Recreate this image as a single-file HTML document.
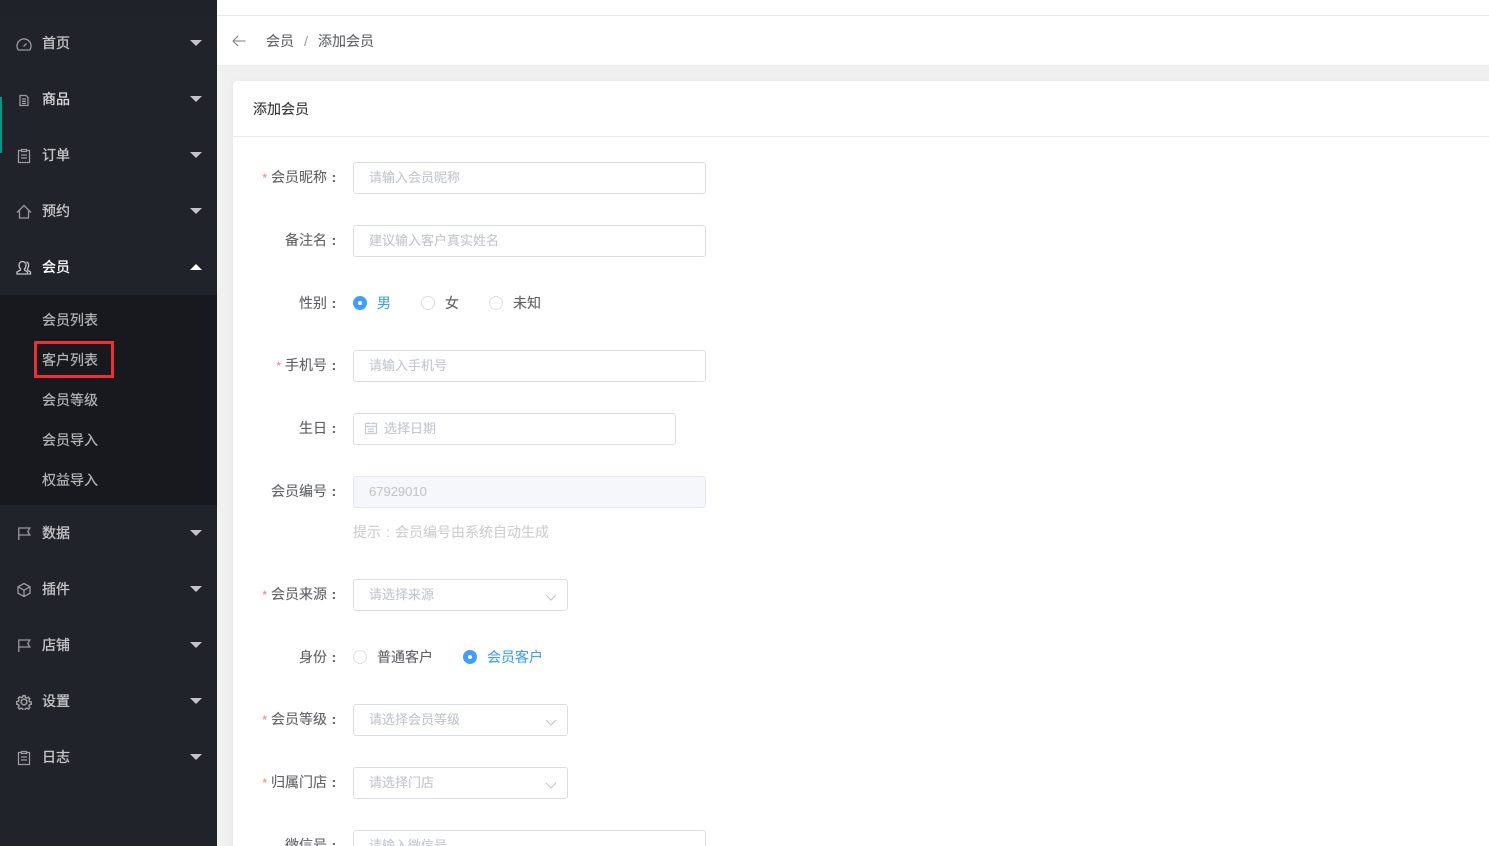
<!DOCTYPE html>
<html lang="zh-CN">
<head>
<meta charset="utf-8">
<title>添加会员</title>
<style>
*{box-sizing:border-box;margin:0;padding:0}
html,body{width:1489px;height:846px;overflow:hidden;background:#f0f0f0}
body{position:relative;font-family:"Liberation Sans","WenQuanYi Zen Hei","Noto Sans CJK SC",sans-serif;font-size:14px;color:#606266}
.abs{position:absolute;white-space:nowrap}
#side{position:absolute;left:0;top:0;width:217px;height:846px;background:#20232a;overflow:hidden}
#sub{position:absolute;left:0;top:295px;width:217px;height:210px;background:#18191e}
.mi{position:absolute;left:42px;width:60px;height:20px;line-height:20px;color:#c6c6c8;font-size:14px;white-space:nowrap;-webkit-text-stroke:.3px currentColor}
.si{position:absolute;left:42px;height:20px;line-height:20px;color:#b4b5b8;font-size:14px;white-space:nowrap;-webkit-text-stroke:.2px currentColor}
.tri{position:absolute;left:190px;width:0;height:0;border-left:6px solid transparent;border-right:6px solid transparent;border-top:6px solid #c4c5c8}
.tri.up{border-top:0;border-bottom:6px solid #fff}
.ic{position:absolute;left:16px;width:16px;height:16px;fill:none;stroke:#9a9b9f;stroke-width:1.3}
#top{position:absolute;left:217px;top:0;width:1272px;height:16px;background:#fff;border-bottom:1px solid #e8e8ea}
#crumb{position:absolute;left:217px;top:16px;width:1272px;height:50px;background:#fff;border-bottom:1px solid #ececee}
#card{position:absolute;left:233px;top:81px;width:1256px;height:780px;background:#fff;border-radius:4px 0 0 0;box-shadow:0 0 5px rgba(0,0,0,.05)}
#hd{position:absolute;left:233px;top:136px;width:1256px;height:1px;background:#e8eaf2}
.lb{position:absolute;right:1148px;height:20px;line-height:20px;color:#606266;white-space:nowrap;text-align:right;-webkit-text-stroke:.12px currentColor}
.c{display:inline-block;width:14px;text-align:center;font-family:"Liberation Sans",sans-serif;font-weight:bold}
.req{color:#f78989;font-size:12px;margin-right:4px;font-family:"Liberation Sans",sans-serif}
.inp{position:absolute;left:353px;height:32px;width:353px;border:1px solid #dcdee6;border-radius:3px;background:#fff;line-height:30px;padding-left:15px;color:#c3c6ce;white-space:nowrap;font-size:13px;-webkit-text-stroke:.12px currentColor}
.sel{width:215px}
.sel svg{position:absolute;left:190px;top:13px;width:14px;height:10px;fill:none;stroke:#c0c4cc;stroke-width:1}
.r{position:absolute;width:14px;height:14px;border-radius:50%;border:1px solid #dcdfe6;background:#fff}
.r.on{background:#409eff;border-color:#409eff}
.r.on::after{content:"";position:absolute;left:4px;top:4px;width:4px;height:4px;border-radius:50%;background:#fff}
.t{position:absolute;height:20px;line-height:20px;white-space:nowrap;color:#606266;-webkit-text-stroke:.12px currentColor}
.blue{color:#409eff}
</style>
</head>
<body>
<div id="side">
  <div class="abs" style="left:0;top:0;width:217px;height:15px;background:#1f2229"></div>
  <div class="abs" style="left:0;top:97px;width:2px;height:56px;background:#009688"></div>
  <div id="sub"></div>

  <svg class="ic" style="top:36px" viewBox="0 0 16 16"><path d="M2.300 14h11.400a7 7 0 1 0-11.400 0zM7.500 10.500l3-3"/></svg>
  <div class="mi" style="top:33px">首页</div><div class="tri" style="top:40px"></div>

  <svg class="ic" style="top:92px" viewBox="0 0 16 16"><path d="M4 3.500h6l2 2v8H4zM6 7h4M6 9.300h4M6 11.500h4"/></svg>
  <div class="mi" style="top:89px;color:#dcdcde">商品</div><div class="tri" style="top:96px"></div>

  <svg class="ic" style="top:148px" viewBox="0 0 16 16"><path d="M5.500 2.500h-3v12h11v-12h-3M5.500 1.500h5v2h-5zM5 7h6M5 10h6"/></svg>
  <div class="mi" style="top:145px">订单</div><div class="tri" style="top:152px"></div>

  <svg class="ic" style="top:204px" viewBox="0 0 16 16"><path d="M1 8.500L8 1.500l7 7M3.500 7v7h9V7"/></svg>
  <div class="mi" style="top:201px">预约</div><div class="tri" style="top:208px"></div>

  <svg class="ic" style="top:260px;stroke:#c4c5c8" viewBox="0 0 16 16"><path d="M6.500 1.500a3.500 3.500 0 0 1 3.500 3.500c0 2-1 3.500-1.500 4v1l3 2v2H1v-2l3.500-2V9C4 8.500 3 7 3 5a3.500 3.500 0 0 1 3.500-3.500zM10.500 2c2 .5 2.500 3 2 4.500-.3 1-.8 2-1 2.500v1l3 2v2h-2"/></svg>
  <div class="mi" style="top:257px;color:#fff">会员</div><div class="tri up" style="top:264px"></div>

  <div class="si" style="top:310px">会员列表</div>
  <div class="si" style="top:350px">客户列表</div>
  <div class="abs" style="left:34px;top:341px;width:80px;height:37px;border:3px solid #ee2f33"></div>
  <div class="si" style="top:390px">会员等级</div>
  <div class="si" style="top:430px">会员导入</div>
  <div class="si" style="top:470px">权益导入</div>

  <svg class="ic" style="top:525px" viewBox="0 0 16 16"><path d="M2.800 15V3h11l-2 3.500 2 3.500h-11"/></svg>
  <div class="mi" style="top:523px">数据</div><div class="tri" style="top:530px"></div>

  <svg class="ic" style="top:582px" viewBox="0 0 16 16"><path d="M8 1.500l6 3.300v6.400l-6 3.300-6-3.300V4.800zM2.500 5L8 8.200 13.500 5M8 8.200v6"/></svg>
  <div class="mi" style="top:579px">插件</div><div class="tri" style="top:586px"></div>

  <svg class="ic" style="top:637px" viewBox="0 0 16 16"><path d="M2.800 15V3h11l-2 3.500 2 3.500h-11"/></svg>
  <div class="mi" style="top:635px">店铺</div><div class="tri" style="top:642px"></div>

  <svg class="ic" style="top:694px;stroke-width:1.700" viewBox="0 0 16 16"><circle cx="8" cy="8" r="2.800"/><path d="M6.800 1h2.400l.4 2 1.500.7 1.800-1 1.600 1.700-1 1.700.6 1.500 2 .5v2.400l-2 .4-.6 1.500 1 1.700-1.700 1.700-1.700-1-1.500.6-.4 2H6.800l-.4-2-1.500-.6-1.700 1-1.700-1.700 1-1.700-.6-1.500-2-.4V7.600l2-.5.6-1.500-1-1.700L3.200 2.200l1.700 1 1.500-.6z" transform="translate(.8 .8) scale(.9)"/></svg>
  <div class="mi" style="top:691px">设置</div><div class="tri" style="top:698px"></div>

  <svg class="ic" style="top:750px" viewBox="0 0 16 16"><path d="M5.500 2.500h-3v12h11v-12h-3M5.500 1.500h5v2h-5zM5 7h6M5 10h6"/></svg>
  <div class="mi" style="top:747px">日志</div><div class="tri" style="top:754px"></div>
</div>

<div id="top"></div>
<div id="crumb"></div>
<svg class="abs" style="left:232px;top:35px" width="14" height="12" viewBox="0 0 14 12" fill="none" stroke="#7b7d82" stroke-width="1"><path d="M13.500 6H1M6 1L1 6l5 5"/></svg>
<div class="t" style="left:266px;top:31px">会员</div>
<div class="t" style="left:304px;top:31px;color:#a0a2a6">/</div>
<div class="t" style="left:318px;top:31px">添加会员</div>

<div id="card"></div>
<div id="hd"></div>
<div class="t" style="left:253px;top:99px;color:#303133">添加会员</div>

<div class="lb" style="top:167px"><span class="req">*</span>会员昵称<span class="c">:</span></div>
<div class="inp" style="top:162px">请输入会员昵称</div>

<div class="lb" style="top:230px">备注名<span class="c">:</span></div>
<div class="inp" style="top:225px">建议输入客户真实姓名</div>

<div class="lb" style="top:293px">性别<span class="c">:</span></div>
<div class="r on" style="left:353px;top:296px"></div><div class="t blue" style="left:377px;top:293px">男</div>
<div class="r" style="left:421px;top:296px"></div><div class="t" style="left:445px;top:293px">女</div>
<div class="r" style="left:489px;top:296px"></div><div class="t" style="left:513px;top:293px">未知</div>

<div class="lb" style="top:355px"><span class="req">*</span>手机号<span class="c">:</span></div>
<div class="inp" style="top:350px">请输入手机号</div>

<div class="lb" style="top:418px">生日<span class="c">:</span></div>
<div class="inp" style="top:413px;width:323px;padding-left:30px">选择日期
  <svg class="abs" style="left:10px;top:7px" width="14" height="14" viewBox="0 0 14 14" fill="none" stroke="#c8ccd3" stroke-width="1.200"><path d="M1.500 2.500h11v10h-11zM1.500 5.500h11M4 1v2M10 1v2M4 8h6M4 10.500h6"/></svg>
</div>

<div class="lb" style="top:481px">会员编号<span class="c">:</span></div>
<div class="inp" style="top:476px;background:#f5f7fa;border-color:#e4e7ed">67929010</div>
<div class="t" style="left:353px;top:522px;color:#cfcfcf">提示<span class="c" style="font-weight:normal">:</span>会员编号由系统自动生成</div>

<div class="lb" style="top:584px"><span class="req">*</span>会员来源<span class="c">:</span></div>
<div class="inp sel" style="top:579px">请选择来源<svg viewBox="0 0 14 10"><path d="M2 2l5 5 5-5"/></svg></div>

<div class="lb" style="top:647px">身份<span class="c">:</span></div>
<div class="r" style="left:353px;top:650px"></div><div class="t" style="left:377px;top:647px">普通客户</div>
<div class="r on" style="left:463px;top:650px"></div><div class="t blue" style="left:487px;top:647px">会员客户</div>

<div class="lb" style="top:709px"><span class="req">*</span>会员等级<span class="c">:</span></div>
<div class="inp sel" style="top:704px">请选择会员等级<svg viewBox="0 0 14 10"><path d="M2 2l5 5 5-5"/></svg></div>

<div class="lb" style="top:772px"><span class="req">*</span>归属门店<span class="c">:</span></div>
<div class="inp sel" style="top:767px">请选择门店<svg viewBox="0 0 14 10"><path d="M2 2l5 5 5-5"/></svg></div>

<div class="lb" style="top:835px">微信号<span class="c">:</span></div>
<div class="inp" style="top:830px">请输入微信号</div>
</body>
</html>
